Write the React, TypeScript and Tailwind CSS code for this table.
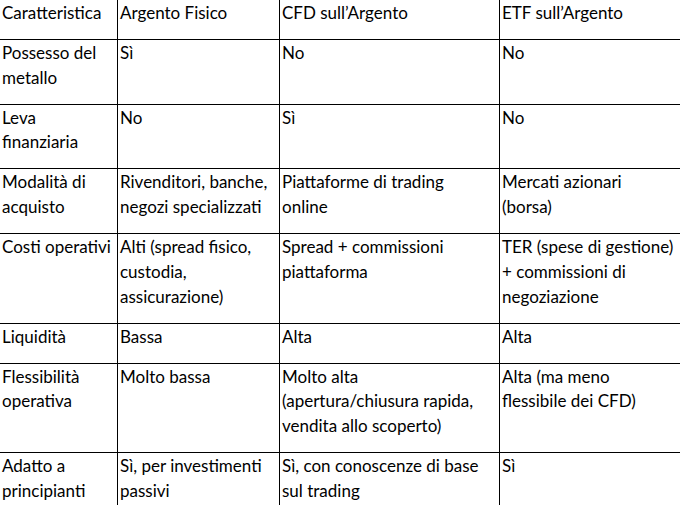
const rows: string[][] = [
  ['Caratteristica', 'Argento Fisico', 'CFD sull’Argento', 'ETF sull’Argento'],
  ['Possesso del metallo', 'Sì', 'No', 'No'],
  ['Leva finanziaria', 'No', 'Sì', 'No'],
  ['Modalità di acquisto', 'Rivenditori, banche, negozi specializzati', 'Piattaforme di trading online', 'Mercati azionari (borsa)'],
  ['Costi operativi', 'Alti (spread fisico, custodia, assicurazione)', 'Spread + commissioni piattaforma', 'TER (spese di gestione) + commissioni di negoziazione'],
  ['Liquidità', 'Bassa', 'Alta', 'Alta'],
  ['Flessibilità operativa', 'Molto bassa', 'Molto alta (apertura/chiusura rapida, vendita allo scoperto)', 'Alta (ma meno flessibile dei CFD)'],
  ['Adatto a principianti', 'Sì, per investimenti passivi', 'Sì, con conoscenze di base sul trading', 'Sì'],
];

// right padding per column, tuned so lines wrap like the source
const padRight = ['pr-[2px]', 'pr-[2px]', 'pr-[10px]', 'pr-[7px]'];

export default function App() {
  return (
    <div className="w-[680px] h-[505px] overflow-hidden bg-white">
      <table
        className="-mt-px -ml-px w-[682px] table-fixed border-collapse text-black text-[17px] leading-[24.7px]"
        style={{ fontFamily: 'Lato, "Noto Sans", sans-serif' }}
      >
        <colgroup>
          <col className="w-[118px]" />
          <col className="w-[162px]" />
          <col className="w-[220px]" />
          <col className="w-[182px]" />
        </colgroup>
        <tbody>
          {rows.map((row, i) => (
            <tr key={i}>
              {row.map((cell, j) => (
                <td
                  key={j}
                  className={`border border-black align-top text-left pl-[2px] pt-px pb-[13.3px] ${padRight[j]}`}
                >
                  {cell}
                </td>
              ))}
            </tr>
          ))}
        </tbody>
      </table>
    </div>
  );
}
